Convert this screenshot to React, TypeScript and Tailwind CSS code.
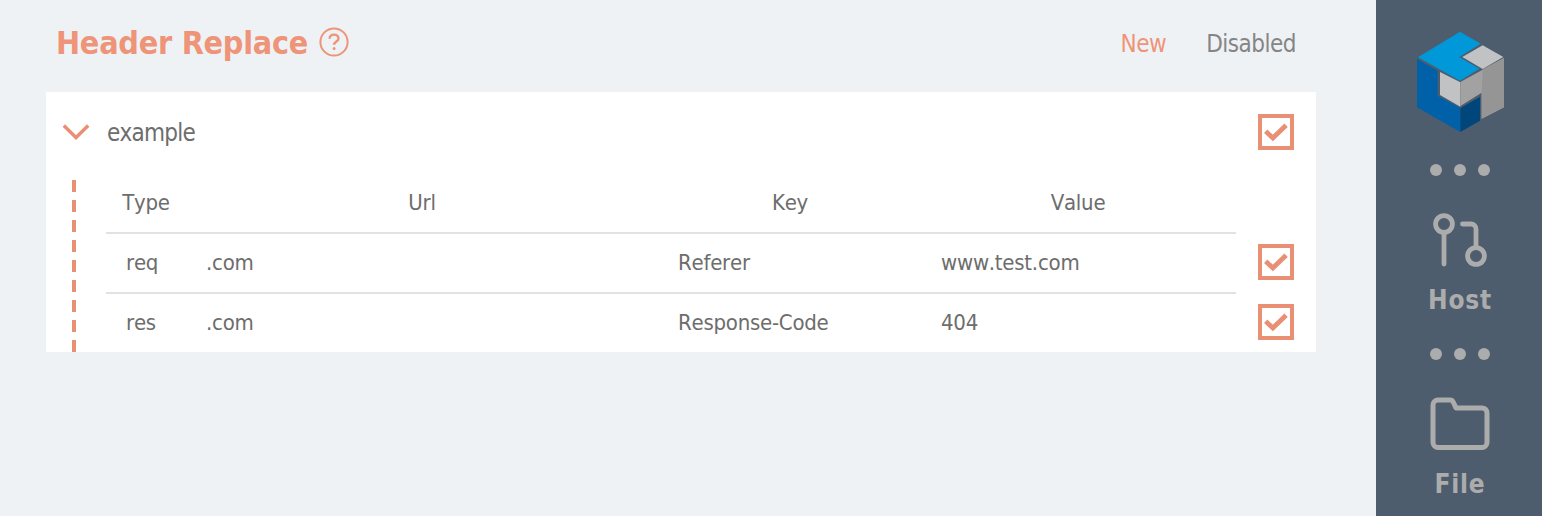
import type { ReactNode } from "react";

const FONT =
  "font-['DejaVu_Sans_Condensed','DejaVu_Sans',sans-serif] [font-stretch:condensed] [font-kerning:none]";

interface Rule {
  type: string;
  url: string;
  key: string;
  value: string;
}

const rules: Rule[] = [
  { type: "req", url: ".com", key: "Referer", value: "www.test.com" },
  { type: "res", url: ".com", key: "Response-Code", value: "404" },
];

function CheckBox() {
  return (
    <span
      role="checkbox"
      aria-checked="true"
      className="flex size-9 shrink-0 items-center justify-center border-4 border-[#e98f73] bg-white"
    >
      <svg viewBox="0 0 28 28" className="size-7" fill="none" stroke="#e98f73" strokeWidth="4.8">
        <path d="M3.7 13.3 10.9 20 24.1 7.2" />
      </svg>
    </span>
  );
}

function HelpIcon() {
  return (
    <svg viewBox="0 0 32 32" className="size-8" fill="none" stroke="#ee9478" strokeWidth="2">
      <circle cx="16" cy="16" r="13.6" />
      <path d="M11.6 12.8c0-2.7 1.9-4.2 4.5-4.2 2.5 0 4.4 1.5 4.4 3.8 0 3.2-4.4 3-4.4 6.4" strokeWidth="2.4" />
      <circle cx="16.1" cy="22.4" r="1.5" fill="#ee9478" stroke="none" />
    </svg>
  );
}

function Logo() {
  return (
    <svg viewBox="138 90 270 312" className="ml-0.5 h-[104px] w-[90px]">
      <path fill="#0098d8" d="M270 95 332 131 268 171 328 206 270 242 144 172Z" />
      <path fill="#c1c2c3" d="M338 136 400 171 338 207 277 171Z" />
      <path fill="#0060a8" d="M141 177 203 212V287L271 324V396L141 322Z" />
      <path fill="#c1c2c3" d="M210 216 271 247V320L210 285Z" />
      <path fill="#a2a2a2" d="M271 246 338 209 402 174V322L335 356V278L271 318Z" />
      <path fill="#959595" d="M338 208 402 174V322L335 356V280Z" />
      <path fill="#00467a" d="M271 324 330 290V362L271 396Z" />
    </svg>
  );
}

function Dots() {
  return (
    <div className="flex gap-3">
      <span className="size-3 rounded-full bg-[#acacac]" />
      <span className="size-3 rounded-full bg-[#acacac]" />
      <span className="size-3 rounded-full bg-[#acacac]" />
    </div>
  );
}

function HostIcon() {
  return (
    <svg viewBox="0 0 56 56" className="size-14" fill="none" stroke="#acacac" strokeWidth="4.8" strokeLinecap="round">
      <circle cx="12" cy="12" r="8.4" />
      <path d="M12 22.5V52" />
      <path d="M30.5 12H39a5 5 0 0 1 5 5V34" />
      <circle cx="44" cy="44" r="8.4" />
    </svg>
  );
}

function FolderIcon() {
  return (
    <svg viewBox="0 0 60 56" className="h-14 w-[60px]" fill="none" stroke="#acacac" strokeWidth="5" strokeLinejoin="round">
      <path d="M8 4H20q2.2 0 3.2 2L26 11.9H52a5 5 0 0 1 5 5V46.5a5 5 0 0 1-5 5H8a5 5 0 0 1-5-5V9a5 5 0 0 1 5-5Z" />
    </svg>
  );
}

function Row({ children }: { children: ReactNode }) {
  return <div className="grid grid-cols-[80px_472px_262px_316px] items-center">{children}</div>;
}

export default function App() {
  return (
    <div className={`flex h-[516px] w-[1542px] overflow-hidden bg-[#eef2f5] text-[#6d6d6d] ${FONT}`}>
      <main className="w-[1376px] shrink-0 pr-15 pl-[46px]">
        <header className="flex h-[92px] items-center pr-5 pb-2 pl-[10px]">
          <h1 className="w-[262px] pt-0.5 text-[32px] leading-10 font-bold tracking-[-0.25px] whitespace-nowrap text-[#ee9478]">
            Header Replace
          </h1>
          <HelpIcon />
          <nav className="ml-auto flex gap-10 pt-1 text-2xl tracking-[-0.5px]">
            <button className="text-[#ee9478]">New</button>
            <button className="text-[#858585]">Disabled</button>
          </nav>
        </header>
        <section className="bg-white">
          <div className="flex h-20 items-center pr-[22px] pl-4">
            <svg viewBox="0 0 28 18" className="mr-[17px] h-[18px] w-7" fill="none" stroke="#e98f73" strokeWidth="3.4">
              <path d="M1.8 2.5 14 14.5 26.2 2.5" />
            </svg>
            <span className="grow pt-0.5 text-2xl tracking-[-0.75px]">example</span>
            <CheckBox />
          </div>
          <div className="flex pt-2 pr-[22px] pl-[26px]">
            <div className="mr-[30px] h-[172px] w-1 bg-[repeating-linear-gradient(to_bottom,#e98f73_0_12px,transparent_12px_20px)]" />
            <div className="-mt-2 w-[1130px] text-[22px] tracking-[-0.25px]">
              <div className="flex h-[62px] items-center border-b-2 border-[#e2e2e2] text-center">
                <Row>
                  <span>Type</span>
                  <span>Url</span>
                  <span className="pl-0.5">Key</span>
                  <span>Value</span>
                </Row>
              </div>
              {rules.map((r, i) => (
                <div
                  key={r.key}
                  className={
                    i === 0
                      ? "flex h-15 items-center border-b-2 border-[#e2e2e2] pb-0.5"
                      : "flex h-[58px] items-center pb-0.5"
                  }
                >
                  <Row>
                    <span className="pl-5">{r.type}</span>
                    <span className="pl-5">{r.url}</span>
                    <span className="pl-5">{r.key}</span>
                    <span className="pl-[21px]">{r.value}</span>
                  </Row>
                </div>
              ))}
            </div>
            <div className="ml-auto flex flex-col gap-6 pt-16">
              <CheckBox />
              <CheckBox />
            </div>
          </div>
        </section>
      </main>
      <aside className="flex w-[168px] shrink-0 flex-col items-center bg-[#4d5d6e] pt-[30px] text-[26px] font-bold tracking-[0.8px] text-[#acacac]">
        <Logo />
        <div className="mt-[30px]">
          <Dots />
        </div>
        <div className="mt-9">
          <HostIcon />
        </div>
        <span className="mt-4 h-8 leading-8">Host</span>
        <div className="mt-8">
          <Dots />
        </div>
        <div className="mt-9">
          <FolderIcon />
        </div>
        <span className="mt-4 h-8 leading-8">File</span>
      </aside>
    </div>
  );
}
